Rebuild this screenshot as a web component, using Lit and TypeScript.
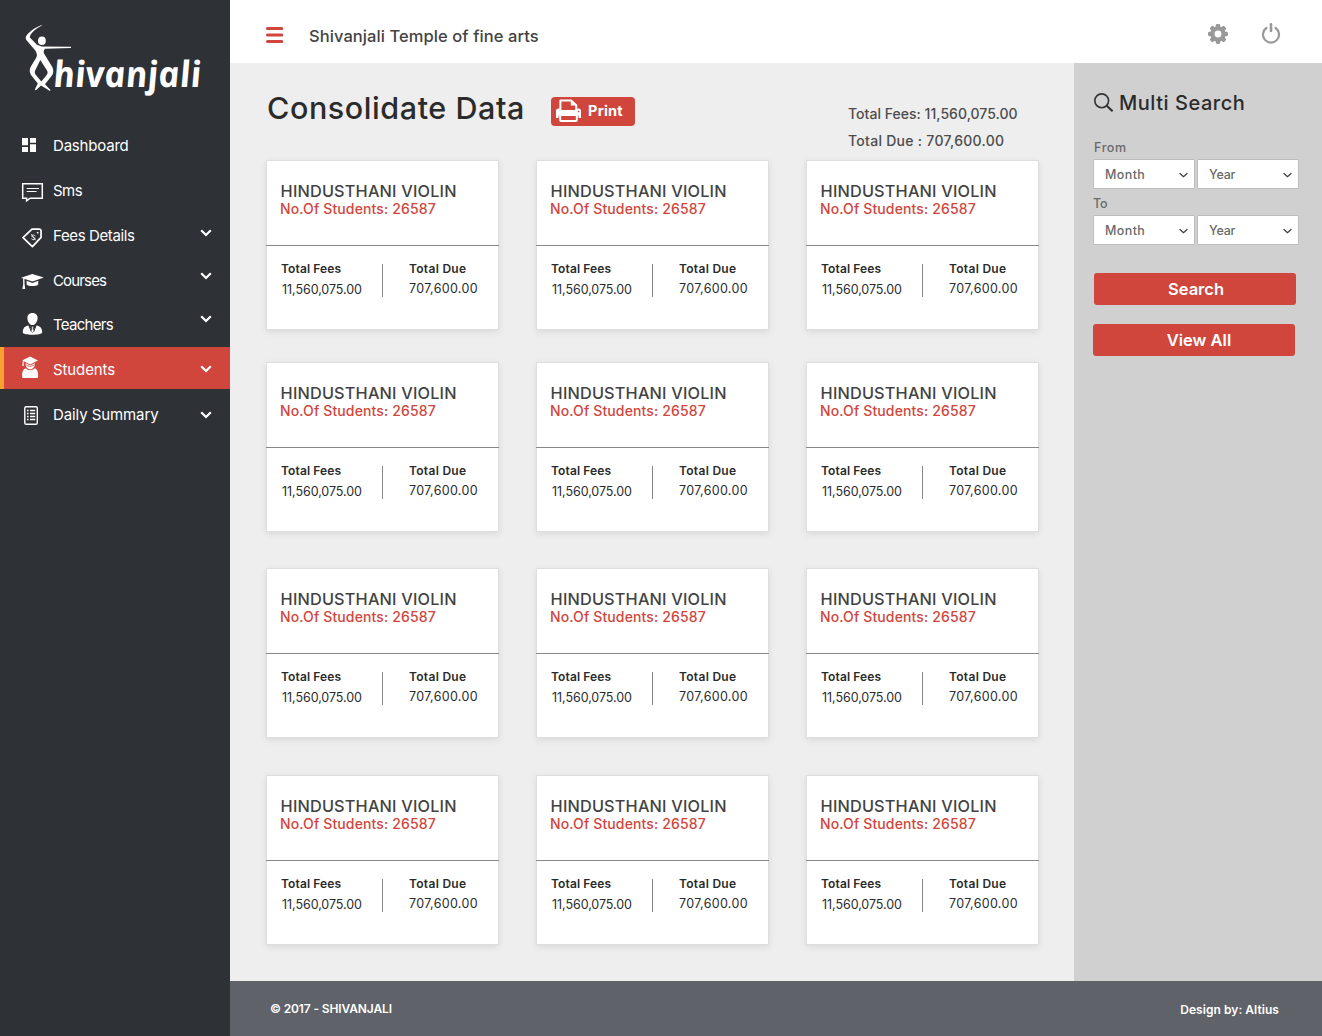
import { LitElement, html, svg, css, TemplateResult } from "lit";
import { classMap } from "lit/directives/class-map.js";

interface NavItem {
  label: string;
  icon: TemplateResult;
  tracking: number;
  chevronTop?: number;
  active?: boolean;
}

const icons = {
  dashboard: svg`<g fill="#fff"><path d="M2 7h6v7.3H2zM2 15.9h6V21H2zM10 7h6v4.7h-6zM10 13.3h6V21h-6z"/></g>`,
  sms: svg`<g fill="none" stroke="#fff" stroke-width="1.5"><path d="M2.7 7.7H22.3V22.2H10.2L6.600 24.8V22.2H2.7Z"/><path d="M6.700 12.500H19M6.700 15.500H16.600" stroke-width="1.1"/></g>`,
  fees: svg`<g fill="none" stroke="#fff" stroke-width="1.7" stroke-linejoin="round"><path d="M12 8.2 19 8 Q20.9 8 21 9.9L21.1 16.4 12.4 25.6 3 16.6Z"/><path d="M15.2 15.2C14.4 13.4 11.4 13.6 12 15.4 12.6 16.9 14.6 15.8 14.9 17.5 15.1 19 12.4 19.2 11.4 17.6M11.2 13.2l4.3 6" stroke-width=".9"/></g><circle cx="17.7" cy="11.7" r=".9" fill="#fff"/>`,
  courses: svg`<g fill="#fff"><path d="M12.3 8 23.8 11.6 12.5 15.6 1 11.7Z"/><path d="M6.6 14.8 12.5 16.9 18.2 14.8V18.4C16.6 20.6 8.6 20.7 6.6 18.4Z"/><path d="M3.1 12.3h1.3l.2 6 .6 4.7H2.4l.8-4.7z"/></g>`,
  teachers: svg`<g fill="#fff"><path d="M12.5 3C15.8 3 17.7 5.2 17.6 8.2 17.5 11.3 15.5 15 12.5 15 9.5 15 7.5 11.3 7.4 8.2 7.3 5.2 9.2 3 12.5 3Z"/><path d="M8.3 15.6 12.4 21.6 16.7 15.6C19.8 16.6 22 17.2 22.2 22.4 22.2 25.4 2.8 25.4 2.8 22.4 3 17.2 5.2 16.6 8.3 15.6Z"/></g><path d="M9.3 16.4 11.2 21.5M15.7 16.4 13.8 21.5" stroke="#2e3136" stroke-width="1"/><path d="M11.4 16.5h2.2l-.5 1.6.7 3.2-1.3 1.3-1.3-1.3.7-3.2z" fill="#fff" stroke="#2e3136" stroke-width=".5"/>`,
  students: svg`<g fill="#fff"><path d="M10 1.6 18 5.6 10.2 9.5 2.2 5.6Z"/><path d="M5.6 8.2 10.2 10.6 14.8 8.2C15 11.8 13 14.2 10.2 14.2 7.4 14.2 5.4 11.8 5.6 8.2Z"/><path d="M2.8 6h.9v5h-1.4z"/><path d="M5.6 13.2C8 15.8 12.4 15.8 14.8 13.2 17.2 14.2 18.2 16.4 18.1 21.4 18.1 22.6 17.4 23 16.4 23H4C2.8 23 2.1 22.6 2.1 21.4 2 16.4 3.2 14.2 5.6 13.2Z"/></g><path d="M6.2 10.2Q10.2 13 14.2 10.2" fill="none" stroke="#d0463c" stroke-width=".7"/>`,
  daily: svg`<g fill="none" stroke="#fff"><rect x="4.8" y="6.7" width="12.5" height="17.6" rx="1.4" stroke-width="1.4"/><path d="M7 10.6h1.6M7 13.6h1.6M7 16.6h1.6M7 19.6h1.6M10 10.6h5.2M10 13.6h5.2M10 16.6h5.2M10 19.6h5.2" stroke-width="1.5"/></g>`,
};

const navItems: NavItem[] = [
  { label: "Dashboard", icon: icons.dashboard, tracking: -0.2 },
  { label: "Sms", icon: icons.sms, tracking: -0.5 },
  { label: "Fees Details", icon: icons.fees, tracking: -0.375, chevronTop: 15.5 },
  { label: "Courses", icon: icons.courses, tracking: -0.85, chevronTop: 13.5 },
  { label: "Teachers", icon: icons.teachers, tracking: -0.7, chevronTop: 12.5 },
  { label: "Students", icon: icons.students, tracking: -0.1, chevronTop: 17.5, active: true },
  { label: "Daily Summary", icon: icons.daily, tracking: -0.09, chevronTop: 18.5 },
];

const courses = Array.from({ length: 12 }, () => ({
  name: "HINDUSTHANI VIOLIN",
  students: "26587",
  fees: "11,560,075.00",
  due: "707,600.00",
}));

const base = css`
  * {
    box-sizing: border-box;
  }
  svg {
    display: block;
    flex: none;
  }
`;

class SideNav extends LitElement {
  static styles = [
    base,
    css`
      :host {
        display: block;
        background: #2e3136;
        color: #fff;
      }
      .logo {
        height: 123px;
      }
      .logo text {
        font: italic 700 32px "Open Sans", sans-serif;
      }
      .list {
        display: flex;
        flex-direction: column;
        gap: 3px;
      }
      .item {
        display: flex;
        height: 42px;
        padding: 0 18.5px 0 16px;
        border-left: 4px solid transparent;
      }
      .item.active {
        background: #d0463c;
        border-left-color: #f9a12e;
      }
      .item.teachers {
        margin-top: -1px;
      }
      .icon {
        margin-top: 8px;
      }
      .label {
        flex: 1;
        margin: 2px 0 0 7px;
        font-size: 15px;
        line-height: 41px;
        white-space: nowrap;
      }
    `,
  ];
  render() {
    return html`
      <svg class="logo" width="230" height="123" viewBox="0 0 230 123" fill="#fff">
        <path d="M41.7 25C34 28 28.600 32 26 36.500C25.400 38 25.800 39.500 27 40.700L35.300 50.500C38 55 37 57 34.500 60.500L30.600 67C29.200 70 29.600 72.500 31 75L37.800 83.500L34.700 89.800L36 90.200L41 85.500L50 91L50.500 90L45 84.200L52.300 75C53.700 72.300 53.500 69.600 52.300 67L44 53.500C43.300 51.500 43.800 50 45.200 48.800L71 48V46.800L41.500 46.500L37 44.700L29.800 37.500C30 33.500 36 28.500 41.900 25.600Z"/>
        <path d="M40.300 60L47 70.500C48 72.400 47.800 73.400 46.500 75.300L41.300 81.500L35.500 74.500C34.500 72.800 34.600 71.500 35.500 69.800Z" fill="#2e3136"/>
        <ellipse cx="41.900" cy="40.800" rx="3.900" ry="4.300"/>
        <g transform="translate(54.500 86.500) skewX(7) scale(1.12 1.13)"><text x="0" y="0" textLength="132" lengthAdjust="spacing">hivanjali</text></g>
      </svg>
      <nav class="list">
        ${navItems.map(
          (n) => html`<div class=${classMap({ item: true, active: !!n.active, teachers: n.label === "Teachers" })}>
            <svg class="icon" width="26" height="30" viewBox="0 0 26 30">${n.icon}</svg>
            <span class="label" style="letter-spacing:${n.tracking}px">${n.label}</span>
            ${n.chevronTop
              ? html`<svg width="12" height="8" viewBox="0 0 12 8" style="margin-top:${n.chevronTop}px">
                  <path d="M1.200 1.200 6 6 10.800 1.200" fill="none" stroke="#fff" stroke-width="2.200" />
                </svg>`
              : ""}
          </div>`
        )}
      </nav>
    `;
  }
}
customElements.define("side-nav", SideNav);

class CourseCard extends LitElement {
  static properties = { course: { attribute: false } };
  declare course: (typeof courses)[number];
  static styles = [
    base,
    css`
      :host {
        display: block;
        width: 233px;
        height: 170px;
        background: #fff;
        box-shadow: inset 0 0 0 1px #dedede, 0 2px 7px rgba(0, 0, 0, 0.09);
        color: #2b2b2b;
        white-space: nowrap;
      }
      .head {
        height: 86px;
        padding: 21px 0 0 14px;
        border-bottom: 1px solid #858789;
      }
      .name {
        padding-left: 0.6px;
        font-size: 16.3px;
        font-weight: 500;
        line-height: 20px;
        letter-spacing: 0.17px;
        color: #434343;
      }
      .students {
        font-size: 14px;
        font-weight: 500;
        line-height: 16px;
        letter-spacing: 0.13px;
        color: #d0463c;
      }
      .totals {
        display: flex;
        padding: 15px 0 0 15px;
      }
      .fees {
        width: 101px;
      }
      .rule {
        width: 1px;
        height: 33px;
        margin: 3px 26px 0 0;
        background: #858789;
      }
      .label {
        font-size: 12px;
        font-weight: 600;
        line-height: 16px;
        letter-spacing: 0.11px;
      }
      .due .label {
        letter-spacing: 0.29px;
      }
      .value {
        font-size: 12.5px;
        line-height: 16px;
        margin-top: 4px;
        letter-spacing: 0.33px;
      }
      .fees .value {
        margin-top: 5px;
        padding-left: 1px;
        letter-spacing: -0.06px;
      }
    `,
  ];
  render() {
    const c = this.course;
    return html`
      <div class="head">
        <div class="name">${c.name}</div>
        <div class="students">No.Of Students: ${c.students}</div>
      </div>
      <div class="totals">
        <div class="fees">
          <div class="label">Total Fees</div>
          <div class="value">${c.fees}</div>
        </div>
        <div class="rule"></div>
        <div class="due">
          <div class="label">Total Due</div>
          <div class="value">${c.due}</div>
        </div>
      </div>
    `;
  }
}
customElements.define("course-card", CourseCard);

class SearchPanel extends LitElement {
  static styles = [
    base,
    css`
      :host {
        display: block;
        background: #d0d0d0;
        padding: 27px 23px 0 19px;
        white-space: nowrap;
      }
      .title {
        display: flex;
        gap: 4px;
        height: 26px;
        padding-left: 1px;
        font-size: 20px;
        font-weight: 500;
        line-height: 26px;
        letter-spacing: 0.53px;
        color: #2b2b2b;
      }
      .label {
        font-size: 12.5px;
        font-weight: 500;
        line-height: 16px;
        letter-spacing: 0.6px;
        color: #6a6a6a;
      }
      .from {
        margin-top: 24px;
        padding-left: 1px;
      }
      .to {
        margin-top: 7px;
        letter-spacing: -0.18px;
      }
      .pair {
        display: flex;
        gap: 2px;
        margin-top: 3px;
      }
      .select {
        display: flex;
        align-items: center;
        justify-content: space-between;
        width: 102px;
        height: 30px;
        padding: 0 6.5px 0 11px;
        background: #fff;
        border: 1px solid #bdbdbd;
        border-radius: 1px;
        font-size: 12.5px;
        font-weight: 500;
        letter-spacing: 0.4px;
        color: #6a6a6a;
      }
      .select.year {
        letter-spacing: -0.2px;
      }
      .select svg {
        margin-top: 1.5px;
      }
      .button {
        display: block;
        width: 202px;
        height: 32px;
        border: 0;
        padding: 0 0 0 10px;
        border-radius: 3px;
        background: #d0463c;
        color: #fff;
        font: 600 16.5px/32px Inter, sans-serif;
        text-align: center;
      }
      .button.search {
        margin: 28px 0 19px 1px;
        padding-left: 2px;
      }
    `,
  ];
  private select(label: string) {
    return html`<div class=${classMap({ select: true, year: label === "Year" })}>
      <span>${label}</span>
      <svg width="9" height="6" viewBox="0 0 9 6"><path d="M.6 1.200 4.500 4.700 8.400 1.200" fill="none" stroke="#3c3c3c" stroke-width="1.300" /></svg>
    </div>`;
  }
  render() {
    return html`
      <div class="title">
        <svg width="21" height="24" viewBox="0 0 21 24" fill="none" stroke="#333">
          <circle cx="7.700" cy="10.800" r="6.900" stroke-width="1.600" />
          <path d="M12.700 15.800 18.600 21.200" stroke-width="2.200" />
        </svg>
        <span>Multi Search</span>
      </div>
      <div class="label from">From</div>
      <div class="pair">${this.select("Month")}${this.select("Year")}</div>
      <div class="label to">To</div>
      <div class="pair">${this.select("Month")}${this.select("Year")}</div>
      <button class="button search">Search</button>
      <button class="button">View All</button>
    `;
  }
}
customElements.define("search-panel", SearchPanel);

class AppRoot extends LitElement {
  static styles = [
    base,
    css`
      :host {
        display: grid;
        grid-template-columns: 230px 844px 248px;
        grid-template-rows: 63px 918px 55px;
        width: 1322px;
        height: 1036px;
        overflow: hidden;
        background: #eee;
        font-family: Inter, "Open Sans", sans-serif;
        white-space: nowrap;
      }
      side-nav {
        grid-row: 1 / 4;
      }
      .header {
        grid-column: 2 / 4;
        display: flex;
        background: #fff;
        padding: 0 41px 0 36px;
      }
      .burger {
        margin-top: 26px;
      }
      .school {
        flex: 1;
        margin: 22px 0 0 25px;
        font-size: 16.5px;
        font-weight: 500;
        line-height: 28px;
        letter-spacing: 0.075px;
        color: #434343;
      }
      .gear {
        margin: 23px 32px 0 0;
      }
      .power {
        margin-top: 22px;
      }
      .main {
        padding: 25px 35px 0 36px;
      }
      .top {
        display: flex;
        height: 72px;
      }
      .title {
        margin: 0 0 0 1px;
        width: 284px;
        font-size: 30.5px;
        font-weight: 500;
        line-height: 40px;
        letter-spacing: 0.57px;
        color: #2b2b2b;
      }
      .print {
        display: flex;
        gap: 7px;
        width: 84px;
        height: 29px;
        margin: 9px 213px 0 0;
        padding: 0 0 0 5px;
        border: 0;
        border-radius: 4px;
        background: #d0463c;
        color: #fff;
        font: 700 14.5px/28px Inter, sans-serif;
        letter-spacing: 0.25px;
      }
      .sums {
        margin-top: 12px;
        font-size: 14px;
        font-weight: 500;
        line-height: 27px;
        letter-spacing: 0.03px;
        color: #4c4c4c;
      }
      .sum-due {
        letter-spacing: 0.28px;
      }
      .cards {
        display: grid;
        grid-template-columns: repeat(3, 233px);
        grid-template-rows: 202px 206px 207px 170px;
        column-gap: 37px;
      }
      .footer {
        grid-column: 2 / 4;
        display: flex;
        justify-content: space-between;
        padding: 19px 43px 0 40px;
        background: #5f6268;
        color: #fff;
        font-size: 12px;
        font-weight: 600;
        line-height: 18px;
      }
      .copy {
        letter-spacing: -0.13px;
      }
      .credit {
        margin-top: 1px;
        letter-spacing: 0.05px;
      }
    `,
  ];
  render() {
    return html`
      <side-nav></side-nav>
      <header class="header">
        <svg class="burger" width="18" height="18" viewBox="0 0 18 18"><path d="M1.500 2.500h14.300M1.500 9h14.300M1.500 15.500h14.300" stroke="#d0463c" stroke-width="3" stroke-linecap="round" /></svg>
        <div class="school">Shivanjali Temple of fine arts</div>
        <svg class="gear" width="22" height="22" viewBox="-11 -11 22 22">
          <g fill="#999">
            ${[0, 45, 90, 135].map((a) => svg`<rect x="-2.200" y="-10" width="4.400" height="20" rx="1.400" transform="rotate(${a})" />`)}
            <circle r="7.700" />
          </g>
          <circle r="3.400" fill="#fff" />
        </svg>
        <svg class="power" width="20" height="22" viewBox="0 0 20 22" fill="none" stroke="#999" stroke-width="2.200" stroke-linecap="round">
          <path d="M5.400 6A8 8 0 1 0 14.600 6" />
          <path d="M10 2.200V9" stroke-width="2.600" />
        </svg>
      </header>
      <main class="main">
        <div class="top">
          <h1 class="title">Consolidate Data</h1>
          <button class="print">
            <svg width="25" height="29" viewBox="0 0 25 29">
              <path d="M0 14Q0 11.500 2.500 11.500H22.500Q25 11.500 25 14V21H0Z" fill="#fff" />
              <path d="M4.400 14V3.400H15.200L20.200 8.200V14Z" fill="#d0463c" stroke="#fff" stroke-width="2" stroke-linejoin="round" />
              <path d="M14.800 3V8.600H20.600Z" fill="#fff" />
              <path d="M4.400 14.700H20.200" stroke="#fff" stroke-width="2" />
              <rect x="4.200" y="17.900" width="16.600" height="6.200" rx=".8" fill="#d0463c" stroke="#fff" stroke-width="2" />
              <path d="M2.700 18.300v3M22.300 18.300v3" stroke="#d0463c" stroke-width=".6" />
              <circle cx="22.600" cy="14.600" r=".8" fill="#d0463c" />
            </svg>
            <span>Print</span>
          </button>
          <div class="sums">
            <div>Total Fees: 11,560,075.00</div>
            <div class="sum-due">Total Due : 707,600.00</div>
          </div>
        </div>
        <div class="cards">${courses.map((c) => html`<course-card .course=${c}></course-card>`)}</div>
      </main>
      <search-panel></search-panel>
      <footer class="footer">
        <span class="copy">© 2017 - SHIVANJALI</span>
        <span class="credit">Design by: Altius</span>
      </footer>
    `;
  }
}
customElements.define("app-root", AppRoot);
